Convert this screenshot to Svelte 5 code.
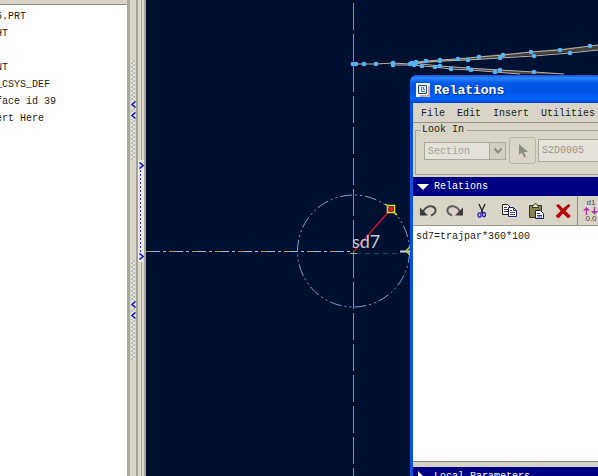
<script>
	let relations = $state('sd7=trajpar*360*100');
	let scope = $state('Section');
	let relations_open = $state(true);
	let params_open = $state(false);

	const tree = ['5.PRT', 'HT', '', 'NT', '_CSYS_DEF', 'face id 39', 'ert Here'];
	const menus = ['File', 'Edit', 'Insert', 'Utilities'];
	const tools = ['Undo', 'Redo', 'Cut', 'Copy', 'Paste', 'Delete'];

	const upper = [
		[353, 64], [356, 64], [364, 64], [376, 64], [393, 63], [410, 64], [416, 62], [426, 61],
		[440, 60], [458, 59], [479, 57], [503, 55], [531, 52], [560, 50], [590, 46], [598, 45]
	];
	const upper_inner = [[416, 63], [440, 61], [468, 60], [500, 58], [534, 56], [570, 53], [598, 50]];
	const lower = [[393, 65], [414, 65], [422, 66], [435, 67], [451, 69], [471, 70], [495, 72], [520, 74]];
	const lower_inner = [[412, 63], [440, 66], [468, 68], [500, 70], [534, 72], [564, 74]];
	const curves = [upper, upper_inner, lower, lower_inner];

	const to_points = (pts) => pts.map((p) => p.join(',')).join(' ');
	const dots = curves.flat().filter(([x, y]) => x < 596 && y < 74);
</script>

{#snippet chevron(dir)}
	<svg class="chevron" width="5" height="7" viewBox="0 0 5 7" aria-hidden="true">
		<path d={dir === 'left' ? 'M4.5 .5L1 3.5l3.5 3' : 'M.5 .5L4 3.5l-3.5 3'} fill="none" stroke="#1414b4" stroke-width="1.5" />
	</svg>
{/snippet}

{#snippet tool_icon(name)}
	<svg width="18" height="18" viewBox="0 0 18 18" fill="none" aria-hidden="true">
		{#if name === 'Undo'}
			<path d="M4 10C7 3 15 2.500 16.500 7.500c.5 3-2 5-4.500 6" stroke="#505050" stroke-width="2" />
			<path d="M1 5.500v8h8z" fill="#3c3c3c" />
		{:else if name === 'Redo'}
			<path d="M14 10C11 3 3 2.500 1.500 7.500c-.5 3 2 5 4.500 6" stroke="#606060" stroke-width="2" />
			<path d="M17 5.500v8H9z" fill="#3c3c3c" />
		{:else if name === 'Cut'}
			<path d="M6 2l4 9M12 2L8 11" stroke="#222" stroke-width="1.3" />
			<ellipse cx="6.500" cy="13" rx="1.500" ry="2.200" stroke="#2222a8" stroke-width="1.3" />
			<ellipse cx="11" cy="12.500" rx="1.500" ry="2.200" stroke="#2222a8" stroke-width="1.3" />
		{:else if name === 'Copy'}
			<path d="M2.500 2.500h5l3 3v7h-8z" fill="#fff" stroke="#222" />
			<path d="M4 5.500h3M4 7.500h4M4 9.500h4" stroke="#444" />
			<path d="M8.500 5.500h5l3 3v6h-8z" fill="#fff" stroke="#1c2070" />
			<path d="M13.500 5.500v3h3M10 8.500h2M10 10.500h5M10 12.500h5" stroke="#3a4090" />
		{:else if name === 'Paste'}
			<path d="M2.500 3.500h12v12h-12z" fill="#858258" stroke="#333" />
			<path d="M5.500 5.500v-2h1c.5-2.500 3.500-2.500 4 0h1v2z" fill="#e6dfa8" stroke="#333" />
			<path d="M8.500 8.500h5l3 3v5h-8z" fill="#fff" stroke="#1c2070" />
			<path d="M10 11.500h3M10 13.500h5M10 15h5" stroke="#3a4090" />
		{:else}
			<path d="M2 3.500L4.500 2l4.500 4.500L14.500 2 16.500 3.500 11.500 9l5.500 5-3 2.500-5-5-4.500 5L1.500 14l5.200-5z" fill="#b40808" />
		{/if}
	</svg>
{/snippet}

<main class="app">
	<aside class="tree">
		<ul>
			{#each tree as item}
				<li>{item}</li>
			{/each}
		</ul>
	</aside>

	<div class="sash sash_tree">
		<button class="grip" aria-label="Collapse tree">{@render chevron('left')}{@render chevron('left')}</button>
		<button class="grip" aria-label="Collapse browser">{@render chevron('left')}{@render chevron('left')}</button>
	</div>
	<div class="sash sash_view">
		<button class="grip_view" aria-label="Expand browser">{@render chevron('right')}{@render chevron('right')}</button>
	</div>

	<section class="canvas">
		<svg class="sketch" viewBox="146 0 452 476" preserveAspectRatio="xMinYMin slice" aria-label="Sketch">
			<g fill="none">
				<path d="M353.500 3v473" stroke="#5a98e0" stroke-dasharray="27 4" />
				<path d="M353.500 9v467" stroke="#b08a40" stroke-dasharray="5 11 5 10" />
				<path d="M146 251.500h206" stroke="#a0b8d0" stroke-dasharray="14 3 3 3" />
				<path d="M146 251.500h206" stroke="#b98d55" stroke-dasharray="6 17" />
				<path d="M356 253.500h44" stroke="#234460" stroke-dasharray="5 4" />
				<circle cx="353.500" cy="251" r="56" stroke="#6fa4d4" stroke-dasharray="12 3 2 3 2 3" />

				<path d="M416 62L598 45v5L416 64zM422 65l98 9h44z" fill="#44413f" />
				{#each curves as curve}
					<polyline points={to_points(curve)} stroke="#b9b4aa" />
				{/each}

				<path d="M354 251L391 209" stroke="#c01824" stroke-width="1.5" />
				<path d="M385 204l3 2M394 212l3 3M387.500 205.500h7v7h-7z" stroke="#d6dc30" stroke-width="1.5" />
				<circle cx="391" cy="209" r="2.500" fill="#d82020" />
				<path d="M400 251.500h10" stroke="#c8d6e4" stroke-width="2" />
				<path d="M410 247l-4 4 4 4" stroke="#b8d040" stroke-width="1.5" />
				<path d="M350 253.500h7" stroke="#8fbf98" />
			</g>
			{#each dots as [x, y]}
				<circle cx={x} cy={y} r="2.300" fill="#58b4f4" />
			{/each}
			<text class="dim" x="352" y="248">sd7</text>
		</svg>

		<div class="dialog" role="dialog" aria-label="Relations">
			<header class="titlebar">
				<svg width="14" height="14" viewBox="0 0 14 14" aria-hidden="true">
					<path d="M0 0h14v14H0z" fill="#f4f0e8" />
					<path d="M2.500 2.500h8v8h-8z" fill="#dfe9f5" stroke="#28507c" />
					<path d="M5.500 4v4.500H9M7.500 4v2.500H9" fill="none" stroke="#5080b0" />
					<path d="M13 3v10H4" fill="none" stroke="#c8664c" />
				</svg>
				<h1>Relations</h1>
			</header>

			<div class="body">
				<nav class="menubar">
					{#each menus as menu}
						<button>{menu}</button>
					{/each}
				</nav>

				<fieldset class="look_in" disabled>
					<legend>Look In</legend>
					<div class="select_wrap">
						<select bind:value={scope} aria-label="Object type">
							<option>Section</option>
						</select>
						<span class="drop" aria-hidden="true">
							<svg width="10" height="8" viewBox="0 0 10 8"><path d="M1.500 1.500L5 5.500l3.500-4" fill="none" stroke="#8c8c80" stroke-width="2" /></svg>
						</span>
					</div>
					<button class="pick" aria-label="Select object">
						<svg width="12" height="16" viewBox="0 0 12 16" aria-hidden="true">
							<path d="M2 1v11l2.800-2.500L7 14.500l2-1L7 9h4z" fill="#8e8e84" />
						</svg>
					</button>
					<input value="S2D0005" aria-label="Object name" />
				</fieldset>

				<button class="section_head" aria-expanded={relations_open} onclick={() => (relations_open = !relations_open)}>
					<svg width="12" height="12" viewBox="0 0 12 12" aria-hidden="true"><path d="M0 3h12L6 9z" fill="#fff" /></svg>
					Relations
				</button>

				<div class="toolbar">
					{#each tools as tool}
						<button aria-label={tool}>{@render tool_icon(tool)}</button>
					{/each}
					<span class="divider"></span>
					<button class="dims" aria-label="Switch dimensions">
						<span>d1</span>
						<svg width="16" height="8" viewBox="0 0 16 8" aria-hidden="true">
							<path d="M3.500 8V2M11.500 0v6" stroke="#b030b0" stroke-width="1.5" />
							<path d="M0 3.500L3.500 0 7 3.500zM8 4h7l-3.500 3.500z" fill="#b030b0" />
						</svg>
						<span>0.0</span>
					</button>
					<span class="next_tool" aria-hidden="true"></span>
				</div>

				<textarea bind:value={relations} spellcheck="false" aria-label="Relations text"></textarea>

				<button class="section_head params" aria-expanded={params_open} onclick={() => (params_open = !params_open)}>
					<svg width="12" height="12" viewBox="0 0 12 12" aria-hidden="true"><path d="M1 0v12l6-6z" fill="#fff" /></svg>
					Local Parameters
				</button>
			</div>
		</div>
	</section>
</main>

<style>
	:global(body) {
		margin: 0;
	}

	.app {
		display: flex;
		height: 100vh;
		overflow: hidden;
		background: #d8d5c8;
		color: #1c1c1c;
		font: 10px/17px 'Liberation Mono', monospace;
	}

	button,
	input,
	select,
	textarea {
		box-sizing: border-box;
		margin: 0;
		padding: 0;
		border: 0;
		border-radius: 0;
		background: none;
		color: inherit;
		font: inherit;
	}

	.tree {
		flex: none;
		box-sizing: border-box;
		width: 127px;
		margin-top: 4px;
		padding-top: 3px;
		border-top: 1px solid #8c8a80;
		background: #fff;
		overflow: hidden;
	}

	.tree ul {
		margin: 0 0 0 -4px;
		padding: 0;
		list-style: none;
	}

	.tree li {
		height: 17px;
		white-space: pre;
	}

	.sash {
		flex: none;
		box-sizing: border-box;
		display: flex;
		flex-direction: column;
	}

	.sash_tree {
		gap: 100px;
		width: 11px;
		padding: 60px 1px 0 1px;
		border-left: 3px solid #a9aa9c;
		border-right: 2px solid #a3a296;
	}

	.sash_view {
		width: 8px;
		padding-top: 160px;
		border-right: 2px solid #a6a79c;
		background: linear-gradient(90deg, #dedbce 3px, #a3a296 3px, #a3a296 4px, #dedbce 4px);
	}

	.grip {
		display: flex;
		flex-direction: column;
		align-items: center;
		justify-content: center;
		gap: 4px;
		height: 100px;
		background: repeating-conic-gradient(#bebcba 0 25%, #e4e2de 0 50%) 0 0 / 4px 4px;
	}

	.grip_view {
		display: flex;
		flex-direction: column;
		align-items: center;
		justify-content: space-between;
		height: 102px;
		padding: 2px 0;
		background:
			repeating-linear-gradient(#eceae6 0 2px, transparent 2px 4px),
			linear-gradient(90deg, #eceae6 2px, #3434a8 2px, #3434a8 3px, #eceae6 3px);
	}

	.chevron {
		flex: none;
		background: #e4e2e6;
	}

	.canvas {
		position: relative;
		flex: 1;
		min-width: 0;
		overflow: hidden;
		background: #001030;
	}

	.sketch {
		display: block;
		width: 100%;
		height: 100%;
	}

	.dim {
		fill: #c2c8d4;
		font: 18px Lato, sans-serif;
	}

	/* floats over the sketch and runs off the right and bottom edges */
	.dialog {
		position: absolute;
		inset: 75px 0 -10px 264px;
		display: flex;
		flex-direction: column;
		padding-left: 3px;
		border-radius: 7px 0 0 0;
		background: #0c50e4;
		overflow: hidden;
	}

	.titlebar {
		flex: none;
		display: flex;
		align-items: center;
		gap: 4px;
		height: 28px;
		margin-left: -3px;
		padding: 2px 0 0 6px;
		box-sizing: border-box;
		background: linear-gradient(#1450d8, #2a86fc 3px, #0458e8 8px, #0054e4 16px, #0464fc 24px, #0444c8);
	}

	.titlebar h1 {
		margin: 0;
		color: #fff;
		font-size: 13px;
		font-weight: bold;
		text-shadow: 1px 1px #10308c;
	}

	.body {
		flex: 1;
		display: flex;
		flex-direction: column;
		min-height: 0;
		background: #d8d5c8;
	}

	.menubar {
		flex: none;
		display: flex;
		gap: 12px;
		box-sizing: border-box;
		height: 20px;
		padding: 1px 0 0 8px;
		border-bottom: 1px solid #98968c;
	}

	.look_in {
		display: flex;
		align-items: center;
		box-sizing: border-box;
		height: 52px;
		min-width: 0;
		margin: 0 0 2px 2px;
		padding: 0 0 4px 8px;
		border: 1px solid #a6a498;
		border-right: 0;
		color: #a09e94;
	}

	.look_in legend {
		height: 14px;
		margin-left: -3px;
		padding: 0 3px 0 1px;
		color: #1c1c1c;
		line-height: 14px;
	}

	.select_wrap {
		display: flex;
		flex: none;
		box-sizing: border-box;
		width: 82px;
		height: 18px;
		border: 1px solid #aaa89c;
		background: #e4e2d8;
	}

	.look_in select {
		flex: 1;
		min-width: 0;
		padding-left: 3px;
		appearance: none;
		opacity: 1;
		color: #a09e94;
	}

	.drop {
		display: grid;
		place-items: center;
		width: 15px;
		border-left: 1px solid #aaa89c;
		background: #d2cfc2;
	}

	.pick {
		flex: none;
		display: grid;
		place-items: center;
		width: 27px;
		height: 27px;
		margin: 0 2px 0 3px;
		border: 1px solid #b8b5a8;
		border-radius: 3px;
	}

	.look_in input {
		flex: 1;
		min-width: 0;
		height: 23px;
		padding-left: 3px;
		border: 1px solid #aaa89c;
		border-right: 0;
		background: #e4e2d8;
		color: #98968c;
	}

	.section_head {
		flex: none;
		display: flex;
		align-items: center;
		gap: 5px;
		height: 19px;
		padding-left: 4px;
		background: #000084;
		color: #fff;
		white-space: nowrap;
	}

	.toolbar {
		flex: none;
		display: flex;
		align-items: center;
		gap: 9px;
		box-sizing: border-box;
		height: 30px;
		padding-left: 6px;
		border-bottom: 1px solid #98968c;
		overflow: hidden;
	}

	.toolbar button {
		flex: none;
		display: grid;
		place-items: center;
		width: 18px;
		height: 24px;
	}

	.divider {
		flex: none;
		align-self: stretch;
		width: 1px;
		margin-left: -4px;
		background: #8c8a80;
	}

	.toolbar .dims {
		margin-left: -5px;
		color: #444;
		font: 8px/8px 'Liberation Sans', sans-serif;
	}

	.next_tool {
		flex: none;
		width: 6px;
		height: 8px;
		margin: 0 0 10px -11px;
		background: #1848a0;
	}

	textarea {
		flex: 1;
		min-height: 0;
		padding: 2px 3px;
		border-bottom: 1px solid #8c8a80;
		background: #fff;
		resize: none;
		outline: none;
	}

	.params {
		margin-top: 5px;
	}
</style>
